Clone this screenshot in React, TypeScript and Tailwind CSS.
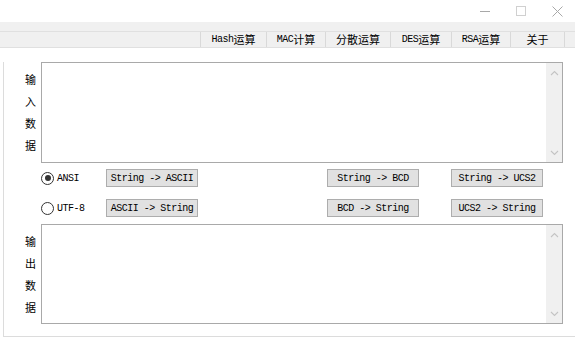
import type { ReactNode } from 'react';

const cjk = "font-['Noto_Sans_CJK_SC',sans-serif] text-[11px]";
const mono = "font-['Liberation_Mono',monospace] text-[10px] tracking-[-0.5px]";

const Latin = ({ children }: { children: ReactNode }) => <span className={mono}>{children}</span>;
const Han = ({ children }: { children: ReactNode }) => <span className={cjk}>{children}</span>;

const tabs = [
  { latin: 'Hash', han: '运算', w: 'w-[66px]' },
  { latin: 'MAC', han: '计算', w: 'w-[59px]' },
  { latin: '', han: '分散运算', w: 'w-[65px]' },
  { latin: 'DES', han: '运算', w: 'w-[61px]' },
  { latin: 'RSA', han: '运算', w: 'w-[59px]' },
  { latin: '', han: '关于', w: 'w-[54px]' },
];

const Chevron = ({ up }: { up?: boolean }) => (
  <svg width="9" height="6" viewBox="0 0 9 6" className="block">
    <path d={up ? 'M1 5 L4.5 1.5 L8 5' : 'M1 1 L4.5 4.5 L8 1'} fill="none" stroke="#c4c4c4" strokeWidth="1.1" />
  </svg>
);

const TextBox = ({ label, h }: { label: string[]; h: string }) => (
  <div className="flex">
    <div className={`w-[37px] flex flex-col items-end pr-[5px] pt-[6px] ${cjk} leading-[22px] text-black`}>
      {label.map((c, i) => (
        <span key={i}>{c}</span>
      ))}
    </div>
    <div className={`w-[522px] ${h} border border-[#a9a9a9] bg-white flex justify-end`}>
      <div className="w-[16px] h-full bg-[#f0f0f0] flex flex-col items-center justify-between pt-[7px] pb-[6px]">
        <Chevron up />
        <Chevron />
      </div>
    </div>
  </div>
);

const Btn = ({ children }: { children: ReactNode }) => (
  <div className={`w-[92px] h-[18px] border border-[#adadad] bg-[#e1e1e1] flex items-center justify-center text-black ${mono}`}>
    {children}
  </div>
);

const Radio = ({ checked, label }: { checked?: boolean; label: string }) => (
  <div className="w-[65px] flex items-center">
    <div className="w-[13px] h-[13px] rounded-full border border-[#333] bg-white flex items-center justify-center">
      {checked && <div className="w-[6px] h-[6px] rounded-full bg-[#333]" />}
    </div>
    <span className={`ml-[3px] text-black ${mono}`}>{label}</span>
  </div>
);

export default function App() {
  return (
    <div className="w-[575px] h-[339px] bg-white overflow-hidden relative">
      {/* title bar */}
      <div className="h-[22px] flex justify-end">
        <div className="w-[36px] flex items-center justify-center">
          <div className="w-[10px] h-px bg-[#a8a8a8]" />
        </div>
        <div className="w-[36px] flex items-center justify-center">
          <div className="w-[10px] h-[10px] border border-[#d0d0d0]" />
        </div>
        <div className="w-[36px] flex items-center justify-center">
          <svg width="11" height="11" viewBox="0 0 11 11">
            <path d="M0.5 0.5 L10.5 10.5 M10.5 0.5 L0.5 10.5" stroke="#a8a8a8" strokeWidth="1" />
          </svg>
        </div>
      </div>

      {/* tab strip */}
      <div className="h-[26px] bg-[#f0f0f0] flex flex-col">
        <div className="h-[9px]" />
        <div className="h-[17px] border-t border-b border-[#e0e0e0] flex">
          <div className="w-[200px]" />
          {tabs.map((t) => (
            <div key={t.han + t.latin} className={`${t.w} border-l border-[#d9d9d9] flex items-center justify-center text-black`}>
              {t.latin && <Latin>{t.latin}</Latin>}
              <Han>{t.han}</Han>
            </div>
          ))}
          <div className="border-l border-[#d9d9d9]" />
        </div>
      </div>

      {/* page */}
      <div className="pl-[3px] pt-[14px]">
        <div className="h-[275px] border-l border-b border-[#dcdcdc] flex flex-col">
          <TextBox label={['输', '入', '数', '据']} h="h-[101px]" />
          <div className="pl-[37px] mt-[6px] flex flex-col gap-[12px]">
            <div className="flex items-center">
              <Radio checked label="ANSI" />
              <Btn>String -&gt; ASCII</Btn>
              <div className="w-[129px]" />
              <Btn>String -&gt; BCD</Btn>
              <div className="w-[32px]" />
              <Btn>String -&gt; UCS2</Btn>
            </div>
            <div className="flex items-center">
              <Radio label="UTF-8" />
              <Btn>ASCII -&gt; String</Btn>
              <div className="w-[129px]" />
              <Btn>BCD -&gt; String</Btn>
              <div className="w-[32px]" />
              <Btn>UCS2 -&gt; String</Btn>
            </div>
          </div>
          <div className="mt-[7px]">
            <TextBox label={['输', '出', '数', '据']} h="h-[100px]" />
          </div>
        </div>
      </div>
    </div>
  );
}
